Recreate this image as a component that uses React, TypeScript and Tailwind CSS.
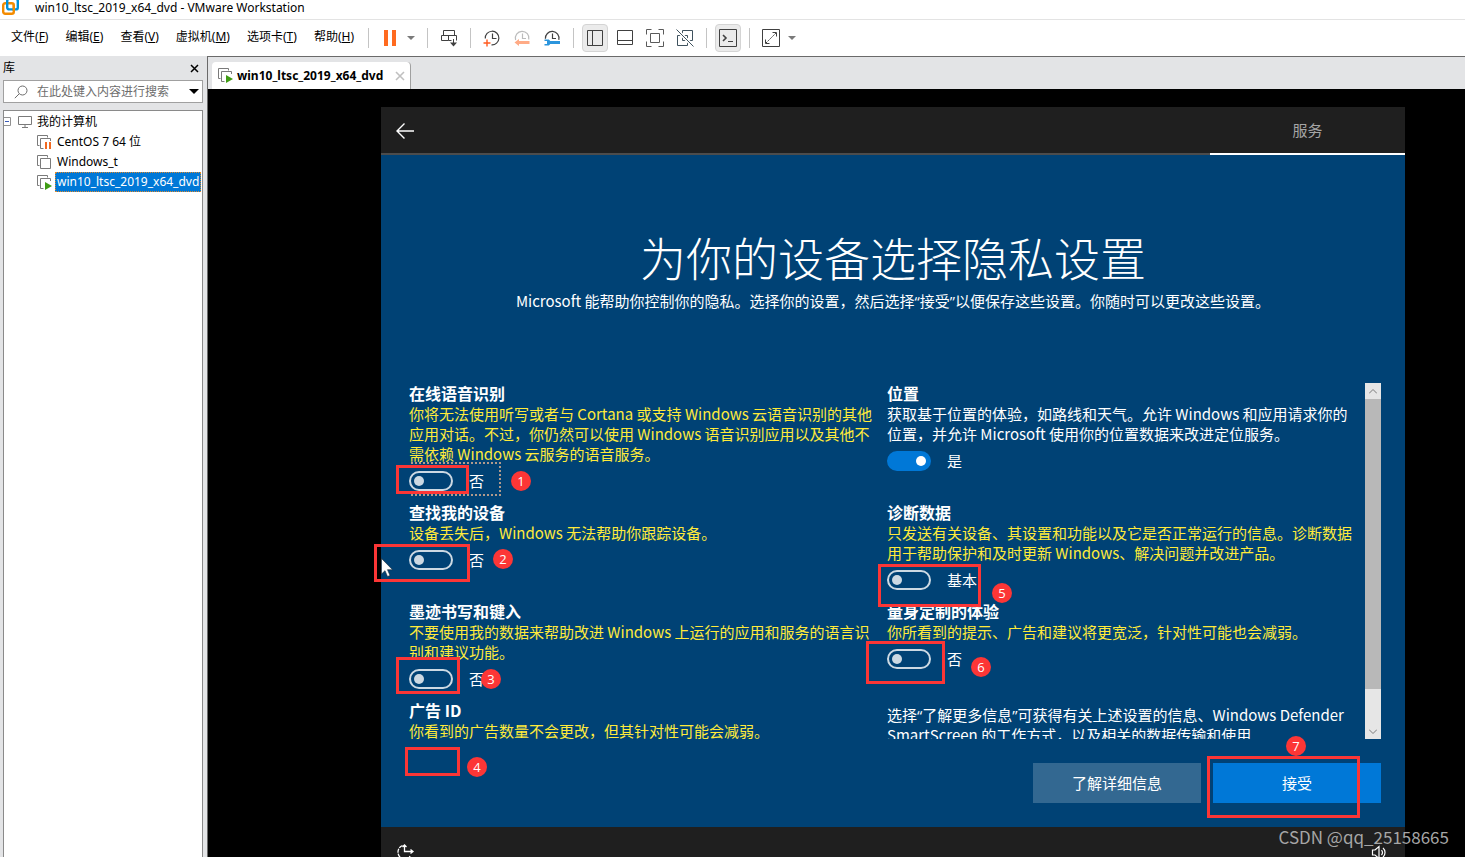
import React from 'react'

const uiFont = "font-['Noto_Sans','Noto_Sans_CJK_SC',sans-serif]"
const setupFont = "font-['Noto_Sans_CJK_SC',sans-serif]"

const menus = [
  { label: '文件', hotkey: 'F' },
  { label: '编辑', hotkey: 'E' },
  { label: '查看', hotkey: 'V' },
  { label: '虚拟机', hotkey: 'M' },
  { label: '选项卡', hotkey: 'T' },
  { label: '帮助', hotkey: 'H' },
]

/* ---------- icons ---------- */

function Icon({ children, size = 18 }: { children: React.ReactNode; size?: number }) {
  return (
    <svg width={size} height={size} viewBox={`0 0 ${size} ${size}`} fill="none" stroke="#404040" aria-hidden="true" className="shrink-0">
      {children}
    </svg>
  )
}

function VmIcon({ state }: { state?: 'paused' | 'running' }) {
  return (
    <svg width="15" height="15" viewBox="0 0 15 15" fill="none" stroke="#7a7a7a" aria-hidden="true" className="shrink-0">
      <path d="M2.500 10.500h-2v-10h10v2" />
      {state ? <path d="M13.500 6V3.500h-10v10h3" /> : <path d="M3.500 3.500h10v10h-10z" />}
      {state === 'paused' && <path d="M8 7h2v7H8zM12 7h2v7h-2z" fill="#f26a21" stroke="none" />}
      {state === 'running' && <path d="M8 7l7 4-7 4z" fill="#3f9c14" stroke="none" />}
    </svg>
  )
}

function VmwareLogo() {
  return (
    <svg width="17" height="17" viewBox="0 0 17 17" fill="none" strokeWidth="2.400" aria-hidden="true" className="shrink-0">
      <rect x="1.200" y="4.200" width="10.600" height="10.600" rx="2" stroke="#f38b00" />
      <rect x="5.200" y="-0.200" width="10.600" height="10.600" rx="2" stroke="#0091da" />
      <path d="M11.800 6v6" stroke="#f38b00" />
    </svg>
  )
}

/* ---------- toolbar ---------- */

function ToolButton({ label, active, children }: { label: string; active?: boolean; children: React.ReactNode }) {
  return (
    <button
      type="button"
      aria-label={label}
      className={`flex h-7 w-[26px] shrink-0 items-center justify-center rounded ${active ? 'border border-[#d4d4d4] bg-[#ebebeb]' : ''}`}
    >
      {children}
    </button>
  )
}

function Caret({ label }: { label: string }) {
  return (
    <button type="button" aria-label={label} className="flex h-7 w-4 shrink-0 items-center justify-center">
      <svg width="8" height="4" viewBox="0 0 8 4" aria-hidden="true">
        <path d="M0 0h8L4 4z" fill="#7a7a7a" />
      </svg>
    </button>
  )
}

function Divider() {
  return <div className="mx-2 h-5 w-px shrink-0 bg-[#c4c4c4]" />
}

function Toolbar() {
  return (
    <div className="flex h-[36px] shrink-0 items-center bg-white pb-px">
      <nav className="flex w-[360px] shrink-0 gap-[17px] whitespace-nowrap pb-0.5 pl-[11px]">
        {menus.map((menu) => (
          <button key={menu.hotkey} type="button" className="leading-4">
            {menu.label}(<u>{menu.hotkey}</u>)
          </button>
        ))}
      </nav>
      <Divider />
      <ToolButton label="挂起">
        <Icon>
          <path d="M3 1h4v16H3zM11 1h4v16h-4z" fill="#ff6a1f" stroke="none" />
        </Icon>
      </ToolButton>
      <Caret label="电源" />
      <Divider />
      <ToolButton label="发送按键">
        <Icon>
          <path d="M3.500 1.500h11v5h-11zM1.500 6.500h7v5h-7zM8.500 6.500h8v5M8.500 11.500h3M13.500 10v5" />
          <path d="M10 13.500h7l-3.500 4z" fill="#404040" stroke="none" />
        </Icon>
      </ToolButton>
      <Divider />
      <div className="flex gap-1">
        <ToolButton label="拍摄快照">
          <Icon>
            <path d="M2.300 9.500A6.800 6.800 0 1 1 8.500 15.800M9.500 4.500v5h4" strokeWidth="1.200" />
            <path d="M4 10.500v7M.5 14h7" stroke="#ff5a1f" strokeWidth="1.400" />
          </Icon>
        </ToolButton>
        <ToolButton label="恢复快照">
          <Icon>
            <path d="M2.600 11A6.800 6.800 0 1 1 15.800 10.500M9.500 4.500v5h3.500" stroke="#bcbcbc" strokeWidth="1.200" />
            <path d="M1.500 13.500l4.500-3.500v2h10.500v3H6v2z" fill="#ffab86" stroke="none" />
          </Icon>
        </ToolButton>
        <ToolButton label="快照管理器">
          <Icon>
            <path d="M2.400 9.800A6.800 6.800 0 1 1 15.800 10.800M9.500 4.500v5h3.500" strokeWidth="1.200" />
            <path
              d="M1.500 10.500h3.500c1.200 0 1.800.6 2.200 1.500H17v3H7.200c-.4.900-1 1.500-2.200 1.500H1.500V15H4v-3H1.500z"
              fill="#2b95dd"
              stroke="none"
            />
          </Icon>
        </ToolButton>
      </div>
      <Divider />
      <div className="flex gap-1">
        <ToolButton label="显示库" active>
          <Icon>
            <path d="M1.500 1.500h15v15h-15zM6.500 1.500v15" />
          </Icon>
        </ToolButton>
        <ToolButton label="缩略图栏">
          <Icon>
            <path d="M1.500 1.500h15v14h-15zM1.500 11.500h15" />
          </Icon>
        </ToolButton>
        <ToolButton label="全屏">
          <Icon>
            <path d="M.5 5.500v-5h5M12.500.5h5v5M17.500 12.500v5h-5M5.500 17.500h-5v-5M4.500 4.500h9v9h-9z" stroke="#5a5a5a" />
          </Icon>
        </ToolButton>
        <ToolButton label="Unity">
          <Icon>
            <path d="M6.500 1.500h10v10h-10zM1.500 6.500h10v10h-10z" stroke="#3f525e" />
            <path d="M.5.500l17 17" stroke="#fff" strokeWidth="3.500" />
            <path d="M.5.500l17 17" stroke="#3f525e" />
          </Icon>
        </ToolButton>
      </div>
      <Divider />
      <ToolButton label="控制台视图" active>
        <Icon>
          <path d="M.5.500h17v17H.5zM9 12.500h5" />
          <path d="M4 6l3 3-3 3" strokeWidth="1.600" />
        </Icon>
      </ToolButton>
      <Divider />
      <ToolButton label="自由拉伸">
        <Icon>
          <path d="M.5.500h17v17H.5zM10.500 3.500h4v4M3.500 10.500v4h4" />
          <path d="M4 14L14 4" strokeDasharray="2 1" />
        </Icon>
      </ToolButton>
      <Caret label="拉伸选项" />
    </div>
  )
}

/* ---------- library ---------- */

function Library() {
  return (
    <aside className="flex w-[207px] shrink-0 flex-col bg-[#e3e4e6] pl-[3px] pr-1">
      <div className="flex h-6 items-center justify-between pr-1">
        <span>库</span>
        <button type="button" aria-label="关闭库">
          <svg width="9" height="9" viewBox="0 0 9 9" stroke="#000" strokeWidth="1.500" aria-hidden="true">
            <path d="M1 1l7 7M8 1L1 8" />
          </svg>
        </button>
      </div>
      <div className="flex h-[23px] shrink-0 items-center border border-[#a0a0a0] bg-white">
        <svg width="14" height="14" viewBox="0 0 14 14" fill="none" stroke="#6d6d6d" aria-hidden="true" className="ml-2.5 shrink-0">
          <circle cx="8.500" cy="5.500" r="4.500" />
          <path d="M5.200 8.800L.8 13.200" />
        </svg>
        <input
          type="text"
          aria-label="搜索"
          placeholder="在此处键入内容进行搜索"
          className="ml-[9px] h-5 min-w-0 flex-1 bg-transparent outline-none placeholder:text-[#6d6d6d]"
        />
        <button type="button" aria-label="筛选" className="mr-[3px]">
          <svg width="10" height="5" viewBox="0 0 10 5" aria-hidden="true">
            <path d="M0 0h10L5 5z" />
          </svg>
        </button>
      </div>
      <ul className="mt-[7px] flex-1 border border-b-0 border-[#8a8a8a] bg-white leading-5">
        <li>
          <div className="flex h-[21px] items-center">
            <svg width="7" height="9" viewBox="0 0 7 9" fill="none" aria-hidden="true">
              <path d="M0 .5h6.500v8H0" stroke="#919191" />
              <path d="M1 4.500h4" stroke="#3b5cb8" />
            </svg>
            <svg width="14" height="12" viewBox="0 0 14 12" fill="none" stroke="#7a7a7a" aria-hidden="true" className="ml-[7px]">
              <path d="M.5.500h13v8H.5zM7 9v2.500M4 11.500h6" />
            </svg>
            <span className="ml-[5px]">我的计算机</span>
          </div>
          <ul className="pl-[33px]">
            <li className="flex h-5 items-center gap-1">
              <VmIcon state="paused" />
              <span className="px-px">CentOS 7 64 位</span>
            </li>
            <li className="flex h-5 items-center gap-1">
              <VmIcon />
              <span className="px-px">Windows_t</span>
            </li>
            <li className="flex h-5 items-center gap-[3px] pr-px">
              <VmIcon state="running" />
              <span className="h-5 flex-1 whitespace-nowrap border border-dotted border-[#e08a2c] bg-[#0078d7] pl-px leading-[18px] text-white">
                win10_ltsc_2019_x64_dvd
              </span>
            </li>
          </ul>
        </li>
      </ul>
    </aside>
  )
}

/* ---------- guest screen ---------- */

// The CJK face draws curly quotes full width, so they come from the latin face.
function Quoted({ children }: { children: React.ReactNode }) {
  return (
    <>
      <span className="font-['Open_Sans']">“</span>
      {children}
      <span className="font-['Open_Sans']">”</span>
    </>
  )
}

interface SettingProps {
  title: string
  lines: string[]
  state?: string
  on?: boolean
  focused?: boolean
}

function Setting({ title, lines, state, on = false, focused = false }: SettingProps) {
  return (
    <section className="whitespace-nowrap text-[15px] leading-5">
      <h2 className="h-5 text-base font-bold leading-[18px]">{title}</h2>
      <p className={on ? '' : 'text-[#ffeb3b]'}>
        {lines.map((line) => (
          <span key={line} className="block">
            {line}
          </span>
        ))}
      </p>
      {state && (
        <label
          className={`mb-[9px] flex w-[90px] items-center gap-4 pb-[3px] pt-[7px] ${
            focused ? 'outline-2 outline-dotted outline-[#b09a8c]' : ''
          }`}
        >
          <input
            type="checkbox"
            role="switch"
            aria-label={title}
            defaultChecked={on}
            className="flex h-5 w-11 shrink-0 appearance-none items-center rounded-full border-2 border-[#ccd9e3] px-[3px] before:size-2.5 before:rounded-full before:bg-[#ccd9e3] checked:justify-end checked:border-[#0078d7] checked:bg-[#0078d7] checked:before:bg-white"
          />
          {state}
        </label>
      )}
    </section>
  )
}

function ScrollBar() {
  return (
    <div className="flex w-4 shrink-0 flex-col bg-[#e6e6e6]">
      <button type="button" aria-label="向上滚动" className="flex h-4 items-center justify-center">
        <svg width="8" height="5" viewBox="0 0 8 5" fill="none" stroke="#7a7a7a" aria-hidden="true">
          <path d="M0 4.500l4-4 4 4" />
        </svg>
      </button>
      <div className="h-[290px] bg-[#b8b8b8]" />
      <div className="flex-1" />
      <button type="button" aria-label="向下滚动" className="flex h-4 items-center justify-center">
        <svg width="8" height="5" viewBox="0 0 8 5" fill="none" stroke="#7a7a7a" aria-hidden="true">
          <path d="M0 .5l4 4 4-4" />
        </svg>
      </button>
    </div>
  )
}

// Numbered callouts drawn over the guest screen
function Callouts() {
  const box = 'absolute border-[3px] border-[#fc3636]'
  const dot =
    "absolute flex size-5 items-center justify-center rounded-full bg-[#fc3636] font-['Open_Sans',sans-serif] text-[13px] leading-5 text-white"
  return (
    <div className="pointer-events-none absolute inset-0">
      <div className={`${box} left-[15px] top-[358px] h-[29px] w-[73px]`} />
      <span className={`${dot} left-[130px] top-[364px]`}>1</span>
      <div className={`${box} -left-[7px] top-[437px] h-[38px] w-[96px]`} />
      <span className={`${dot} left-[112px] top-[442px]`}>2</span>
      <div className={`${box} left-[15px] top-[550px] h-[37px] w-[64px]`} />
      <span className={`${dot} left-[100px] top-[562px]`}>3</span>
      <div className={`${box} left-[24px] top-[640px] h-[29px] w-[55px]`} />
      <span className={`${dot} left-[86px] top-[650px]`}>4</span>
      <div className={`${box} left-[497px] top-[457px] h-[43px] w-[103px]`} />
      <span className={`${dot} left-[611px] top-[476px]`}>5</span>
      <div className={`${box} left-[485px] top-[534px] h-[43px] w-[79px]`} />
      <span className={`${dot} left-[590px] top-[550px]`}>6</span>
      <div className={`${box} left-[826px] top-[649px] h-[62px] w-[153px]`} />
      <span className={`${dot} left-[905px] top-[629px]`}>7</span>
      <svg width="13" height="20" viewBox="0 0 13 20" aria-hidden="true" className="absolute left-0 top-[451px]">
        <path d="M.5.500v15.500l3.500-3.300 2.500 5.800 2.500-1-2.500-5.800h5z" fill="#fff" stroke="#1b2a38" strokeWidth=".6" />
      </svg>
    </div>
  )
}

function GuestScreen() {
  return (
    <div className={`relative flex flex-1 flex-col bg-[#1f1f1f] text-white ${setupFont}`}>
      <header className="flex h-12 shrink-0 justify-between">
        <div className="flex flex-1 items-center border-b-2 border-[#4c4c4c] pl-[15px] pt-0.5">
          <button type="button" aria-label="返回">
            <svg width="18" height="16" viewBox="0 0 18 16" fill="none" stroke="#fff" strokeWidth="1.400" aria-hidden="true">
              <path d="M18 8H1M8.500.5L1 8l7.500 7.500" />
            </svg>
          </button>
        </div>
        <div className="flex w-[195px] items-center justify-center border-b-2 border-white text-[15px] text-[#a5a5a5]">服务</div>
      </header>

      <main className="shrink-0 bg-[#004275] pb-6 pl-7 pr-6 pt-[73px]">
        <div className="mr-1 text-center">
          <h1 className="text-[46px] font-light leading-[56px]">为你的设备选择隐私设置</h1>
          <p className="mt-[7px] text-[15px] leading-5">
            Microsoft 能帮助你控制你的隐私。选择你的设置，然后选择<Quoted>接受</Quoted>以便保存这些设置。你随时可以更改这些设置。
          </p>
        </div>

        <div className="mt-[72px] flex h-[356px] overflow-hidden">
          <div className="grid flex-1 auto-rows-max grid-cols-2 pt-px">
            <Setting
              title="在线语音识别"
              lines={[
                '你将无法使用听写或者与 Cortana 或支持 Windows 云语音识别的其他',
                '应用对话。不过，你仍然可以使用 Windows 语音识别应用以及其他不',
                '需依赖 Windows 云服务的语音服务。',
              ]}
              state="否"
              focused
            />
            <Setting
              title="位置"
              lines={[
                '获取基于位置的体验，如路线和天气。允许 Windows 和应用请求你的',
                '位置，并允许 Microsoft 使用你的位置数据来改进定位服务。',
              ]}
              state="是"
              on
            />
            <Setting title="查找我的设备" lines={['设备丢失后，Windows 无法帮助你跟踪设备。']} state="否" />
            <Setting
              title="诊断数据"
              lines={[
                '只发送有关设备、其设置和功能以及它是否正常运行的信息。诊断数据',
                '用于帮助保护和及时更新 Windows、解决问题并改进产品。',
              ]}
              state="基本"
            />
            <Setting
              title="墨迹书写和键入"
              lines={['不要使用我的数据来帮助改进 Windows 上运行的应用和服务的语言识', '别和建议功能。']}
              state="否"
            />
            <Setting title="量身定制的体验" lines={['你所看到的提示、广告和建议将更宽泛，针对性可能也会减弱。']} state="否" />
            <Setting title="广告 ID" lines={['你看到的广告数量不会更改，但其针对性可能会减弱。']} />
            <p className="whitespace-nowrap pt-1 text-[15px] leading-5">
              选择<Quoted>了解更多信息</Quoted>可获得有关上述设置的信息、Windows Defender
              <br />
              SmartScreen 的工作方式，以及相关的数据传输和使用
            </p>
          </div>
          <ScrollBar />
        </div>

        <div className="mt-6 flex justify-end gap-3 text-[15px]">
          <button type="button" className="h-10 w-[168px] bg-[#336891]">
            了解详细信息
          </button>
          <button type="button" className="h-10 w-[168px] bg-[#0078d7]">
            接受
          </button>
        </div>
      </main>

      <footer className="flex justify-between px-4 pt-[17px]">
        <button type="button" aria-label="轻松使用">
          <svg width="18" height="18" viewBox="0 0 18 18" fill="none" stroke="#fff" strokeWidth="1.300" aria-hidden="true">
            <path d="M5.500 1.500A7 7 0 0 0 1 8a7 7 0 0 0 3 6" strokeDasharray="4 1" />
            <path d="M7.500 1v6.500h8M5.500 3l2-2 2 2M13.500 5.500l2.500 2-2.500 2M13 12a7 7 0 0 1-5 4" />
          </svg>
        </button>
        <button type="button" aria-label="音量">
          <svg width="18" height="18" viewBox="0 0 18 18" fill="none" stroke="#fff" strokeWidth="1.200" aria-hidden="true">
            <path d="M1.500 6v5H4l4 3.500v-12L4 6zM10.500 6a4 4 0 0 1 0 5M12 4a6 6 0 0 1 0 9" />
          </svg>
        </button>
      </footer>

      <Callouts />
    </div>
  )
}

export default function App() {
  return (
    <div className={`relative flex h-screen flex-col overflow-hidden bg-white text-xs text-black ${uiFont}`}>
      <div className="flex h-5 shrink-0 items-center border-b border-[#e3e3e3] pb-1 pl-0.5">
        <VmwareLogo />
        <h1 className="ml-4 leading-4">win10_ltsc_2019_x64_dvd - VMware Workstation</h1>
      </div>
      <Toolbar />

      <div className="flex min-h-0 flex-1">
        <Library />
        <div className="flex min-w-0 flex-1 flex-col border-l border-t border-[#6a6a6a] bg-black">
          <div className="flex h-8 shrink-0 items-end bg-[#e3e4e6] pl-1">
            <div className="flex h-[27px] items-center rounded-t border-r border-[#a0a0a0] bg-white pl-1.5 pr-[5px]">
              <VmIcon state="running" />
              <span className="ml-1 font-bold">win10_ltsc_2019_x64_dvd</span>
              <button type="button" aria-label="关闭选项卡" className="ml-3">
                <svg width="10" height="10" viewBox="0 0 10 10" stroke="#c0c0c0" strokeWidth="1.600" aria-hidden="true">
                  <path d="M1 1l8 8M9 1L1 9" />
                </svg>
              </button>
            </div>
          </div>
          <div className="flex min-h-0 flex-1 flex-col pl-[173px] pr-[60px] pt-[18px]">
            <GuestScreen />
          </div>
        </div>
      </div>

      <span className="pointer-events-none absolute bottom-2 right-4 font-['Noto_Sans_CJK_SC',sans-serif] text-[17px] leading-6 text-[#a6a6a6]">
        CSDN @qq_25158665
      </span>
    </div>
  )
}
